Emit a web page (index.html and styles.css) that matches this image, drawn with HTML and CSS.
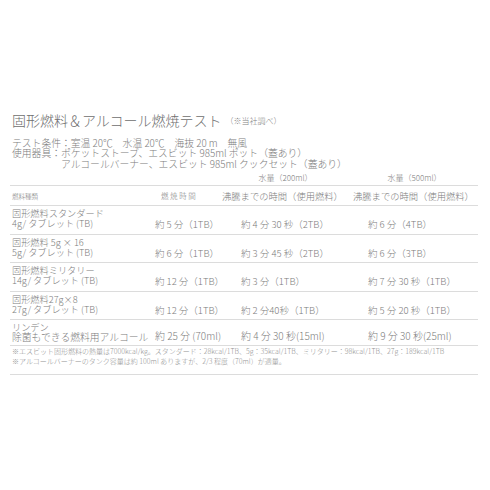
FILE: index.html
```html
<!DOCTYPE html>
<html lang="ja">
<head>
<meta charset="utf-8">
<link rel="stylesheet" href="styles.css">
</head>
<body>
<div class="page">
  <h1 class="title">固形燃料＆アルコール燃焼テスト<span class="note">（※当社調べ）</span></h1>
  <div class="cond">
    <div class="cline"><span class="lab">テスト条件：</span><span>室温 20℃　水温 20℃　海抜 20 m　無風</span></div>
    <div class="cline"><span class="lab">使用器具：</span><span>ポケットストーブ、エスビット 985ml ポット（蓋あり）<br>アルコールバーナー、エスビット 985ml クックセット（蓋あり）</span></div>
  </div>
  <div class="table">
    <div class="row cap">
      <div></div><div></div>
      <div class="capc">水量（200ml）</div>
      <div class="capc">水量（500ml）</div>
    </div>
    <div class="row head">
      <div class="h1">燃料種類</div>
      <div class="h2">燃焼時間</div>
      <div class="h3">沸騰までの時間（使用燃料）</div>
      <div class="h3">沸騰までの時間（使用燃料）</div>
    </div>
    <div class="row data">
      <div class="name">固形燃料スタンダード<br>4g/ タブレット (TB)</div>
      <div class="v v2">約 5 分（1TB）</div>
      <div class="v v3">約 4 分 30 秒（2TB）</div>
      <div class="v v4">約 6 分（4TB）</div>
    </div>
    <div class="row data">
      <div class="name">固形燃料 5g × 16<br>5g/ タブレット (TB)</div>
      <div class="v v2">約 6 分（1TB）</div>
      <div class="v v3">約 3 分 45 秒（2TB）</div>
      <div class="v v4">約 6 分（3TB）</div>
    </div>
    <div class="row data">
      <div class="name">固形燃料ミリタリー<br>14g/ タブレット (TB)</div>
      <div class="v v2">約 12 分（1TB）</div>
      <div class="v v3">約 3 分（1TB）</div>
      <div class="v v4">約 7 分 30 秒（1TB）</div>
    </div>
    <div class="row data">
      <div class="name">固形燃料27g×8<br>27g/ タブレット (TB)</div>
      <div class="v v2">約 12 分（1TB）</div>
      <div class="v v3">約 2 分40秒（1TB）</div>
      <div class="v v4">約 5 分 20 秒（1TB）</div>
    </div>
    <div class="row data last">
      <div class="name">リンデン<br><span class="big">除菌もできる燃料用アルコール</span></div>
      <div class="v v2 vb">約 25 分 (70ml)</div>
      <div class="v v3 vb">約 4 分 30 秒(15ml)</div>
      <div class="v v4 vb">約 9 分 30 秒(25ml)</div>
    </div>
    <div class="foot">
      <p>※エスビット固形燃料の熱量は7000kcal/kg。スタンダード：28kcal/1TB、5g：35kcal/1TB、ミリタリー：98kcal/1TB、27g：189kcal/1TB</p>
      <p>※アルコールバーナーのタンク容量は約 100ml ありますが、2/3 程度（70ml）が適量。</p>
    </div>
  </div>
</div>
</body>
</html>
```
FILE: styles.css
```css
html, body {
  margin: 0;
  padding: 0;
  background: #ffffff;
}
body {
  font-family: "Noto Sans CJK JP", "Noto Sans", sans-serif;
  color: #7c7c7c;
  width: 490px;
  height: 490px;
  overflow: hidden;
}
.page {
  padding: 112px 12px 0 10px;
}
.title {
  margin: 0 0 0 2px;
  font-size: 14px;
  line-height: 16px;
  font-weight: 300;
  color: #6e6e6e;
  white-space: nowrap;
}
.note {
  font-size: 8px;
  margin-left: 4px;
  vertical-align: 2px;
  color: #808080;
}
.cond {
  margin: 9px 0 0 2px;
  font-size: 9.8px;
  line-height: 10.4px;
  font-weight: 300;
  white-space: nowrap;
}
.cline {
  display: flex;
}
.lab {
  flex: none;
}
.table {
  margin-top: 4px;
  width: 468px;
}
.row {
  display: grid;
  grid-template-columns: 140px 70px 131px 127px;
}
.cap {
  height: 12px;
  font-size: 8px;
  line-height: 10px;
  border-bottom: 1px solid #dcdcdc;
  font-weight: 300;
}
.capc {
  text-align: center;
  white-space: nowrap;
}
.head {
  height: 19px;
  border-bottom: 1px solid #dcdcdc;
  align-items: center;
  white-space: nowrap;
  font-weight: 300;
}
.h1 {
  font-size: 6.5px;
  padding-left: 2px;
}
.h2 {
  font-size: 7.5px;
  letter-spacing: 1.6px;
  padding-left: 11px;
}
.h3 {
  font-size: 9.3px;
  padding-left: 2px;
}
.data {
  height: 27.5px;
  border-bottom: 1px solid #dcdcdc;
  white-space: nowrap;
  font-weight: 300;
}
.name {
  font-size: 9.2px;
  line-height: 10px;
  padding: 2px 0 0 2px;
}
.v {
  font-size: 9.5px;
  line-height: 12px;
  padding-top: 12px;
}
.v2 { padding-left: 5px; }
.v3 { padding-left: 21px; }
.v4 { padding-left: 17px; }
.last {
  height: 25px;
}
.big {
  font-size: 9.8px;
}
.vb {
  font-size: 10px;
  padding-top: 10px;
}
.foot {
  padding: 0 0 8px 2px;
  border-bottom: 1px solid #dcdcdc;
  color: #929292;
  font-size: 7px;
  line-height: 10px;
  white-space: nowrap;
  font-weight: 300;
}
.foot p {
  margin: 0;
}
```
